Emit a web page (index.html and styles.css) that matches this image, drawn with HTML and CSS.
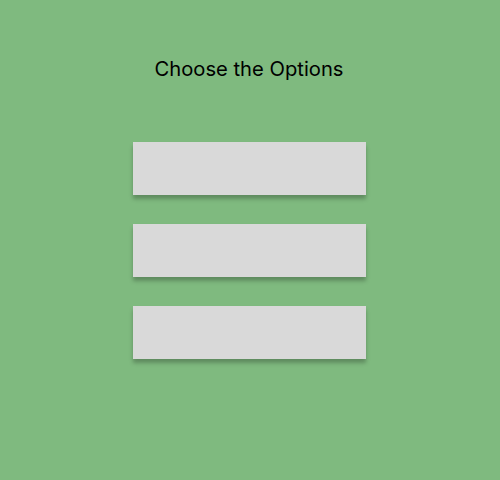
FILE: index.html
```html
<!DOCTYPE html>
<html>
<head>
<meta charset="utf-8">
<link rel="stylesheet" href="styles.css">
</head>
<body>
<main class="page">
  <h1 class="title">Choose the Options</h1>
  <div class="options">
    <div class="option"></div>
    <div class="option"></div>
    <div class="option"></div>
  </div>
</main>
</body>
</html>
```

FILE: styles.css
```css
html, body {
  margin: 0;
  padding: 0;
}
body {
  background: #7fba7f;
  width: 500px;
  height: 480px;
  overflow: hidden;
}
.page {
  display: flex;
  flex-direction: column;
  align-items: center;
  padding-top: 57px;
}
.title {
  margin: 0 0 0 -2px;
  font-family: Inter, sans-serif;
  font-weight: 400;
  font-size: 20.2px;
  line-height: 24px;
  color: #000;
}
.options {
  margin-top: 61px;
  display: flex;
  flex-direction: column;
  gap: 29px;
}
.option {
  width: 233px;
  height: 53px;
  background: #d9d9d9;
  box-shadow: 0 4px 4px rgba(0, 0, 0, 0.25);
  margin-left: -1px;
}
```
